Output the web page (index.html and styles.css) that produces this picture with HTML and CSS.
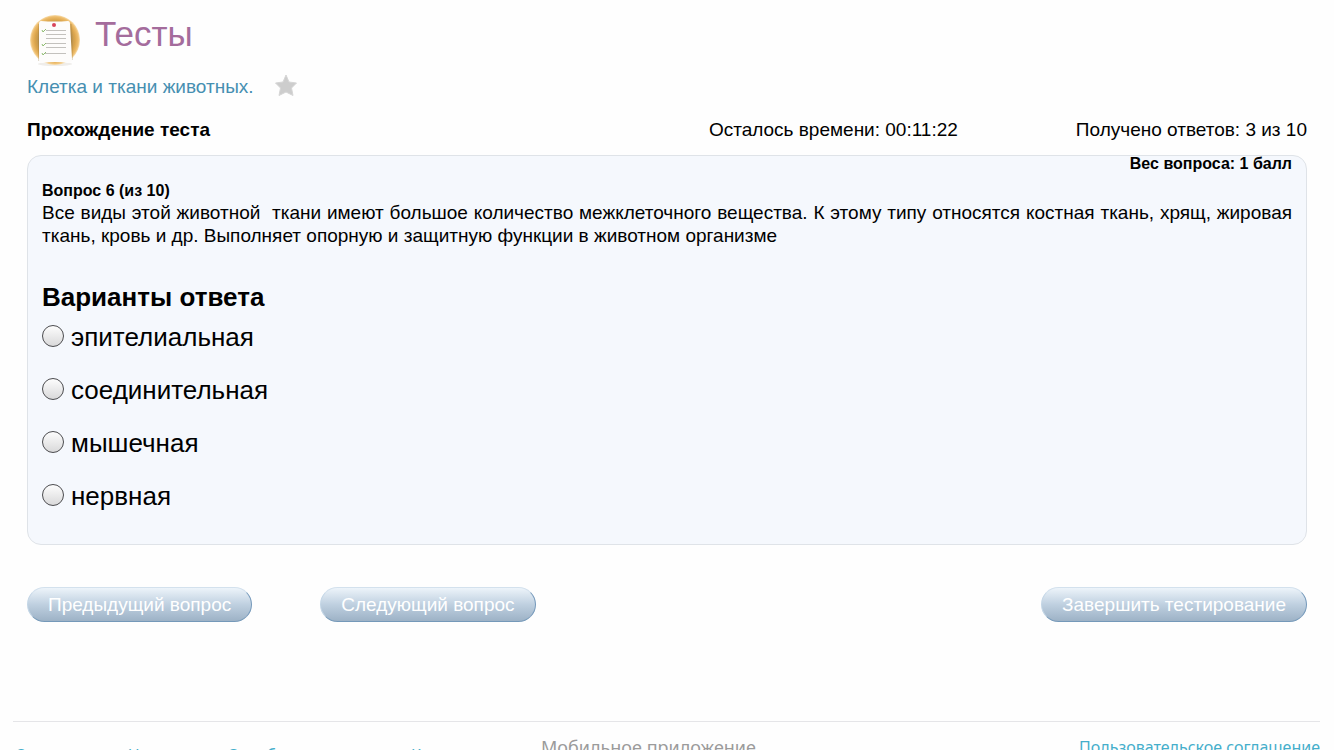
FILE: index.html
```html
<!DOCTYPE html>
<html lang="ru">
<head>
<meta charset="utf-8">
<meta name="viewport" content="width=device-width, initial-scale=1">
<title>Тесты</title>
<link rel="stylesheet" href="styles.css">
</head>
<body>
<main class="page">
  <header class="title">
    <svg class="title-icon" viewBox="0 0 56 56" aria-hidden="true">
      <defs>
        <radialGradient id="disc">
          <stop offset="0.55" stop-color="#a98a50"/>
          <stop offset="0.8" stop-color="#dba54c"/>
          <stop offset="0.93" stop-color="#eebd6c"/>
          <stop offset="1" stop-color="#f8e0b4"/>
        </radialGradient>
      </defs>
      <ellipse cx="28" cy="52" rx="17" ry="2" fill="#efedea"/>
      <circle cx="28" cy="28" r="25" fill="url(#disc)"/>
      <path d="M11 12L45 12L46 48L11 49z" fill="#8d713d" opacity="0.25"/>
      <path d="M14 9Q28 10 41 9Q43 9 43 12L45 47Q45 51 41 51Q28 49 15 51Q12 51 12 48L12 12Q12 9 14 9z" fill="#fdfcfb"/>
      <g stroke="#c3c1bd" stroke-width="1">
        <path d="M19 18.500h20M19 22.500h20M19 26.500h20M18 31.500h21M19 35.500h20M18 41.500h21"/>
      </g>
      <g stroke="#8fbd72" stroke-width="1" fill="none">
        <path d="M15 18l1 2 3-3M15 32l1 2 3-3M15 41l1 2 3-3"/>
      </g>
      <circle cx="27" cy="13" r="2" fill="#d8455a"/>
    </svg>
    <h1 class="title-text">Тесты</h1>
  </header>

  <div class="topic">
    <a class="topic-link" href="#">Клетка и ткани животных.</a>
    <button class="star" type="button" aria-label="В избранное">
      <svg viewBox="0 0 24 24" aria-hidden="true">
        <path d="M12 1L15 8L22.500 9L17.500 14L19 21.500L12 18L5 21.500L6.500 14L1.500 9L9 8z" fill="#cdcdcd" stroke="#d6d6d6" stroke-width="1" stroke-linejoin="round"/>
      </svg>
    </button>
  </div>

  <div class="status">
    <h2 class="status-name">Прохождение теста</h2>
    <span class="status-time">Осталось времени: 00:11:22</span>
    <span class="status-count">Получено ответов: 3 из 10</span>
  </div>

  <form class="test">
    <section class="question">
      <p class="weight">Вес вопроса: 1 балл</p>
      <h3 class="number">Вопрос 6 (из 10)</h3>
      <p class="wording">Все виды этой животной&nbsp; ткани имеют большое количество межклеточного вещества. К этому типу относятся костная ткань, хрящ, жировая ткань, кровь и др. Выполняет опорную и защитную функции в животном организме</p>
      <fieldset class="answers">
        <legend class="answers-title">Варианты ответа</legend>
        <label class="answer"><input class="radio" type="radio" name="answer"><span>эпителиальная</span></label>
        <label class="answer"><input class="radio" type="radio" name="answer"><span>соединительная</span></label>
        <label class="answer"><input class="radio" type="radio" name="answer"><span>мышечная</span></label>
        <label class="answer"><input class="radio" type="radio" name="answer"><span>нервная</span></label>
      </fieldset>
    </section>
    <div class="actions">
      <button class="pill" type="button">Предыдущий вопрос</button>
      <button class="pill" type="button">Следующий вопрос</button>
      <button class="pill pill-finish" type="button">Завершить тестирование</button>
    </div>
  </form>
</main>

<footer class="footer">
  <nav class="footer-nav">
    <a href="#">О проекте</a>
    <a href="#">Новости</a>
    <a href="#">Служба поддержки</a>
    <a href="#">Контакты</a>
  </nav>
  <span class="footer-app">Мобильное приложение</span>
  <a class="footer-terms" href="#">Пользовательское соглашение</a>
</footer>
</body>
</html>
```
FILE: styles.css
```css
* {
  box-sizing: border-box;
}

body {
  margin: 0;
  background: #fefefe;
  color: #000;
  font: 19px/23px "Liberation Sans", Arial, sans-serif;
}

h1, h2, h3, p {
  margin: 0;
}

a {
  text-decoration: none;
}

.page {
  padding: 12px 27px 0;
}

.title {
  display: flex;
  gap: 12px;
}

.title-icon {
  width: 56px;
  height: 56px;
}

.title-text {
  color: #a46c9c;
  font-size: 35px;
  font-weight: 400;
  line-height: 44px;
}

.topic {
  display: flex;
  align-items: center;
  gap: 20px;
  margin-top: 6px;
}

.topic-link {
  color: #468fb1;
}

.star {
  width: 24px;
  height: 24px;
  padding: 0;
  border: 0;
  background: none;
}

.star svg {
  display: block;
}

.status {
  display: flex;
  margin-top: 20px;
}

.status-name {
  flex: 1;
  font-size: 19px;
  font-weight: 700;
}

.status-count {
  margin-left: 118px;
}

.question {
  margin-top: 14px;
  padding: 0 14px 20px;
  border: 1px solid #dfe3e8;
  border-radius: 14px;
  background: #f5f8fd;
}

.weight {
  font-size: 16px;
  font-weight: 700;
  line-height: 16px;
  text-align: right;
}

.number {
  margin-top: 8px;
  font-size: 16px;
  line-height: 21px;
}

.wording {
  text-align: justify;
}

.answers {
  display: flex;
  flex-direction: column;
  margin: 35px 0 0;
  padding: 0;
  border: 0;
  font-size: 26px;
  line-height: 30px;
}

.answers-title {
  margin-bottom: 10px;
  padding: 0;
  font-weight: 700;
}

.answer {
  display: flex;
  align-items: center;
  gap: 7px;
  margin-bottom: 23px;
}

.answer:last-child {
  margin-bottom: 13px;
}

.radio {
  width: 22px;
  height: 22px;
  margin: 0 0 3px;
  appearance: none;
  border: 1px solid #4c4c4f;
  border-radius: 50%;
  background: linear-gradient(#fdfdfd, #d9d9da);
}

.radio:checked {
  background: radial-gradient(#333 0 5px, #e9e9ea 6px);
}

.actions {
  display: flex;
  gap: 68px;
  margin-top: 42px;
}

.pill {
  height: 35px;
  padding: 0 20px;
  border: 1px solid;
  border-color: #d3e1ed #7599bb #7599b9 #c3d6e6;
  border-radius: 18px;
  background: linear-gradient(#edf4fa, #bfd0e0 50%, #9db2c6);
  color: #fff;
  font: 19px/23px "Liberation Sans", Arial, sans-serif;
}

.pill-finish {
  margin-left: auto;
}

.footer {
  display: grid;
  grid-template-columns: 528px auto 1fr;
  margin: 99px 14px 0 13px;
  padding: 13px 0 16px;
  border-top: 1px solid #e5e5e8;
  font: 18px/24px "Noto Sans", sans-serif;
}

.footer a {
  color: #45aecb;
}

.footer-nav {
  display: flex;
  gap: 34px;
  padding: 8px 2px 0;
  font-size: 16px;
}

.footer-app {
  color: #9b9b9b;
}

.footer-terms {
  font-size: 16px;
  text-align: right;
}
```
